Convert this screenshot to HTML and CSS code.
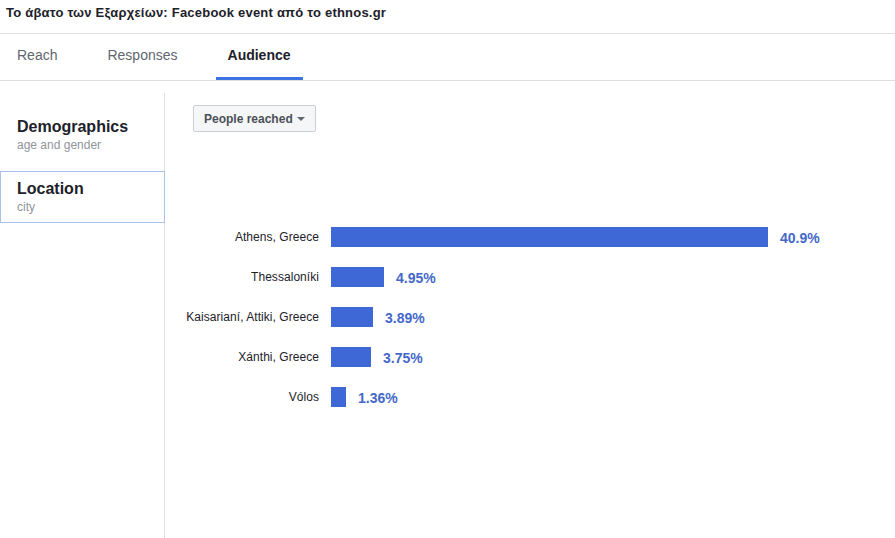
FILE: index.html
```html
<!DOCTYPE html>
<html lang="el">
<head>
<meta charset="utf-8">
<title>Audience</title>
<link rel="stylesheet" href="styles.css">
</head>
<body>
<header class="title-bar">Το άβατο των Εξαρχείων: Facebook event από το ethnos.gr</header>
<nav class="tabs">
  <div class="tab">Reach</div>
  <div class="tab">Responses</div>
  <div class="tab tab-active">Audience</div>
</nav>
<main class="main">
  <aside class="sidebar">
    <div class="side-item">
      <div class="side-title">Demographics</div>
      <div class="side-sub">age and gender</div>
    </div>
    <div class="side-item side-item-selected">
      <div class="side-title">Location</div>
      <div class="side-sub">city</div>
    </div>
  </aside>
  <section class="content">
    <button class="dropdown">People reached <span class="caret"></span></button>
    <div class="chart">
      <div class="row">
        <div class="label">Athens, Greece</div>
        <div class="bar" style="width:437px"></div>
        <div class="value">40.9%</div>
      </div>
      <div class="row">
        <div class="label">Thessaloníki</div>
        <div class="bar" style="width:53px"></div>
        <div class="value">4.95%</div>
      </div>
      <div class="row">
        <div class="label">Kaisarianí, Attiki, Greece</div>
        <div class="bar" style="width:42px"></div>
        <div class="value">3.89%</div>
      </div>
      <div class="row">
        <div class="label">Xánthi, Greece</div>
        <div class="bar" style="width:40px"></div>
        <div class="value">3.75%</div>
      </div>
      <div class="row">
        <div class="label">Vólos</div>
        <div class="bar" style="width:15px"></div>
        <div class="value">1.36%</div>
      </div>
    </div>
  </section>
</main>
</body>
</html>
```

FILE: styles.css
```css
html, body {
  margin: 0;
  padding: 0;
  background: #ffffff;
  font-family: "Liberation Sans", Arial, Helvetica, sans-serif;
  color: #1d2129;
  height: 100%;
}

.title-bar {
  height: 33px;
  line-height: 26px;
  padding-left: 6px;
  font-size: 13px;
  font-weight: bold;
  letter-spacing: 0.22px;
  color: #1d2129;
  border-bottom: 1px solid #dddfe2;
  white-space: nowrap;
}

.tabs {
  display: flex;
  gap: 26px;
  padding-left: 3px;
  height: 46px;
  border-bottom: 1px solid #dddfe2;
}

.tab {
  padding: 12px 12px 0;
  line-height: 18px;
  font-size: 14px;
  color: #606770;
  box-sizing: border-box;
  height: 46px;
  border-bottom: 3px solid transparent;
}

.tab:first-child {
  padding-left: 14px;
}

.tab-active {
  font-weight: bold;
  color: #1d2129;
  border-bottom-color: #3b74e2;
}

.main {
  display: flex;
  padding-top: 12px;
  height: calc(100vh - 93px);
  box-sizing: content-box;
}

.sidebar {
  width: 164px;
  flex: none;
  border-right: 1px solid #dddfe2;
  padding-top: 16px;
  box-sizing: content-box;
}

.side-item {
  height: 52px;
  box-sizing: border-box;
  border: 1px solid transparent;
  padding: 7px 16px 7px;
  margin-bottom: 10px;
}

.side-item-selected {
  border-color: #a8c2ec;
  margin-right: -1px;
  position: relative;
  background: #ffffff;
}

.side-title {
  font-size: 16px;
  line-height: 20px;
  font-weight: bold;
  color: #1d2129;
}

.side-sub {
  font-size: 12px;
  line-height: 16px;
  color: #90949c;
}

.content {
  flex: 1;
  padding: 12px 0 0 28px;
}

.dropdown {
  display: flex;
  align-items: center;
  gap: 4px;
  height: 27px;
  box-sizing: border-box;
  padding: 0 10px 0 10px;
  border: 1px solid #ccd0d5;
  border-radius: 2px;
  background: #f5f6f7;
  font-family: "Liberation Sans", Arial, Helvetica, sans-serif;
  font-size: 12px;
  font-weight: bold;
  color: #4b4f56;
}

.caret {
  width: 0;
  height: 0;
  border-left: 4px solid transparent;
  border-right: 4px solid transparent;
  border-top: 4px solid #606770;
  margin-top: 1px;
}

.chart {
  margin-top: 95px;
  margin-left: -24px;
  display: flex;
  flex-direction: column;
  gap: 20px;
}

.row {
  display: flex;
  align-items: center;
  height: 20px;
}

.label {
  width: 150px;
  flex: none;
  text-align: right;
  font-size: 12px;
  letter-spacing: 0.05px;
  color: #1d2129;
  white-space: nowrap;
  margin-right: 12px;
}

.bar {
  height: 20px;
  background: #3e68d6;
  flex: none;
}

.value {
  margin-left: 12px;
  font-size: 14px;
  font-weight: bold;
  color: #4468c9;
  margin-top: 1px;
}
```
